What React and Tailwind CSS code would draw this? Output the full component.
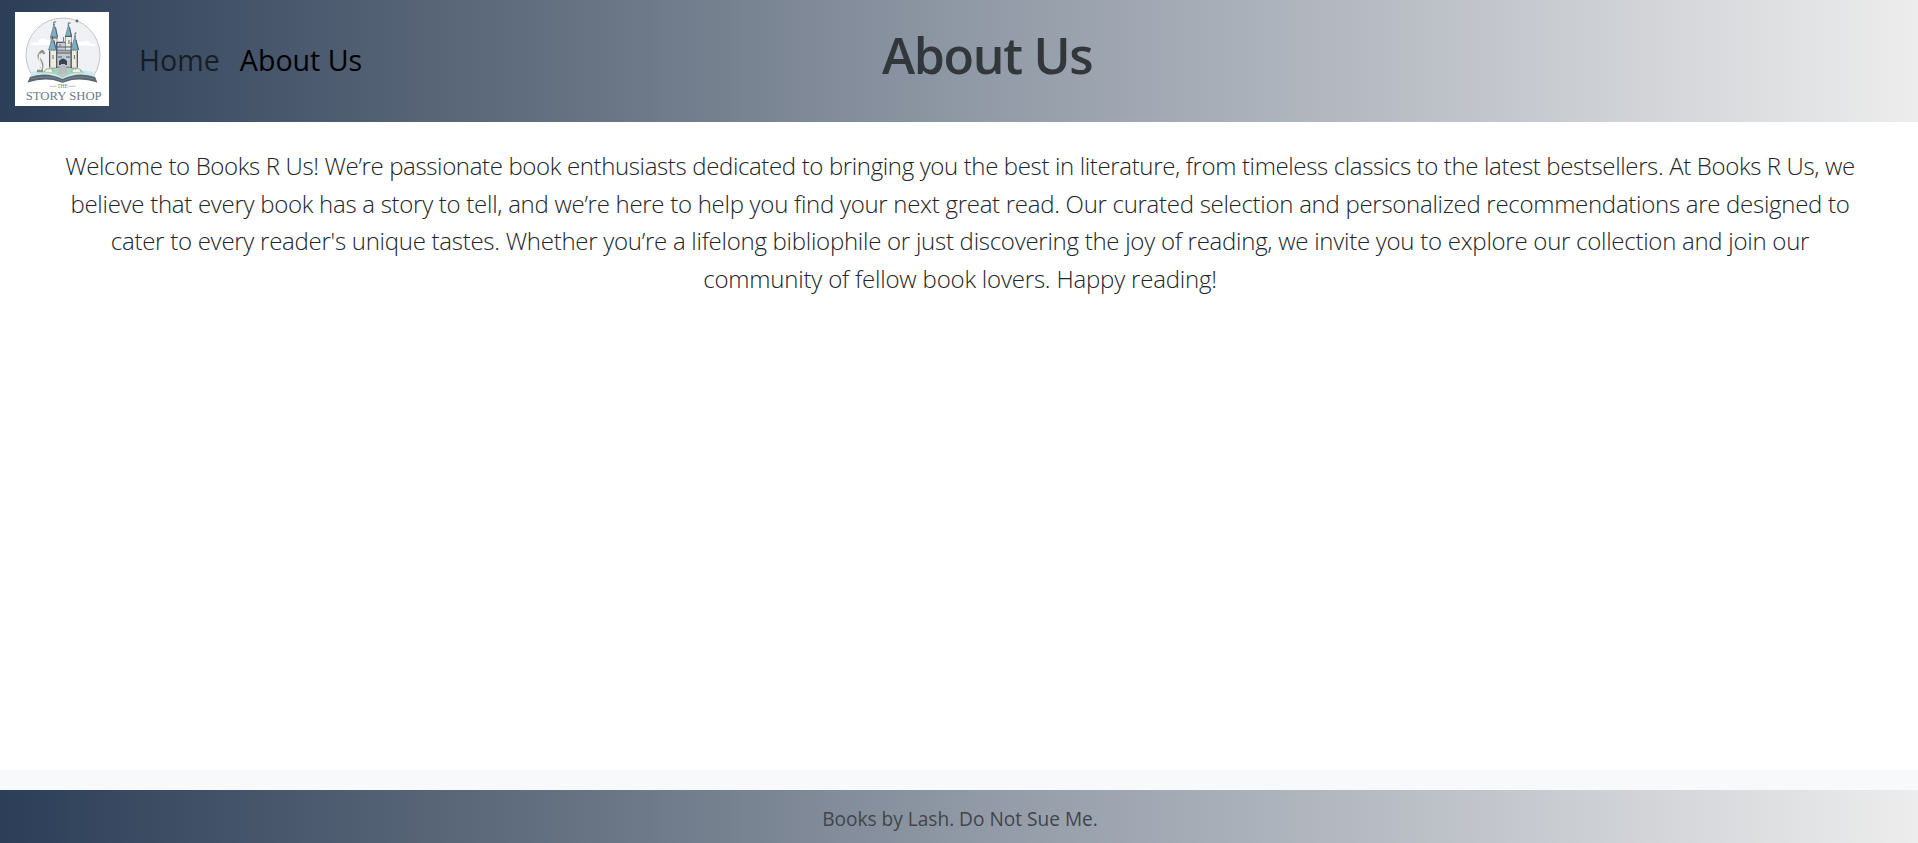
function Logo() {
  return (
    <svg viewBox="0 0 94 94" className="block size-[94px] shrink-0 bg-white">
      <circle cx="48" cy="43" r="37" fill="#eff1f4" stroke="#a7b0b7" strokeWidth=".7" />
      <path d="M6 65h82v20H6z" fill="#fff" />
      <g fill="#fff">
        <path d="M15 33q3-4 7-2q4-7 10-3q5-1 6 5zM60 33q2-5 7-3q5-4 9 2q4-1 5 2z" />
      </g>
      <circle cx="62" cy="9" r="1.400" fill="#596773" />
      <path d="M17 60Q31 56 47.500 65Q64 56 78 60L81 67Q62 62 47.500 68Q33 62 14 67Z" fill="#cfe8ee" />
      <path d="M26 61Q32 54 47 55Q62 53 70 61Q56 60 47.500 66Q39 60 26 61Z" fill="#a5d3bb" />
      <path d="M25 59Q29 55 26 49Q22 45 25 41Q28 37 29 42M22 59h6" fill="none" stroke="#839188" strokeWidth="2.400" />
      <path d="M25 58Q28 55 25.500 50Q23 45 25.500 41.500" fill="none" stroke="#f2eedb" strokeWidth="1.500" />
      <path d="M37 36h20v20H37z" fill="#8f9aa5" />
      <g fill="#f0ecd9" stroke="#6d7a86" strokeWidth=".6">
        <path d="M36 25h6v14h-6zM50.500 24h6v14h-6z" />
        <path d="M34.500 38h7v18h-7zM56 38h6.500v18H56z" />
        <path d="M42 30h8.500v8H42z" fill="#c9ccd3" />
        <path d="M41.500 39H56v16H41.500z" fill="#c3c8cf" />
      </g>
      <g fill="none" stroke="#4c5965" strokeWidth="1.200">
        <path d="M41.700 30v26M56.200 30v26M34.700 39v16M62.300 39v16" />
        <path d="M35.500 26h7M50 24.500h7M42 30.500h8M42 35h14M41 41h15M43 45h4M51 45h4" />
        <path d="M38 43v4M59.500 43v4M39 28v4M54 28v4M45 32v3M48.500 25v6" stroke="#78848f" />
      </g>
      <path d="M39 12L35.500 25H42.500ZM53.500 13L50.500 24H56.500ZM37.500 26L33.500 38H41.500ZM60 24L56 38H63.500Z" fill="#7fb0c2" stroke="#506b7c" strokeWidth=".6" />
      <path d="M40.500 15l2 10M54.500 15l2 9M39 29l2.500 9M61 28l2.500 10" stroke="#465866" strokeWidth=".9" />
      <path d="M38.800 13V10h2.400M53.300 14v-3h2.400M37.500 27v-3M60 25v-4h1.500" fill="none" stroke="#4c5965" strokeWidth=".9" />
      <path d="M44 53v-4q4-5 8 0v4z" fill="#384550" />
      <path d="M46 52h4l3 10H42z" fill="#b9bbc0" />
      <path d="M30 60q0-4 4-3q3-2 4 3M57 60q0-4 4-3q4-2 5 3" fill="#f5f0d8" stroke="#7d9b89" strokeWidth=".7" />
      <path d="M15 65Q31 59 47.500 67Q64 59 80 65L82.500 70.500Q64 65 50 70Q47.500 71.500 45 70Q31 65 12.500 70.500Z" fill="#586772" />
      <path d="M16 67Q33 62 47.500 69Q62 62 79 67" fill="none" stroke="#87949c" strokeWidth=".7" />
      <path d="M34.500 74.300h7M53.500 74.300h7" stroke="#8a96a0" strokeWidth=".6" />
      <text x="47.500" y="76" textAnchor="middle" fill="#74818c" className="font-['Liberation_Serif',serif] text-[5.500px]">THE</text>
      <text x="10.700" y="87.500" fill="#6c7b87" textLength="76" lengthAdjust="spacingAndGlyphs" className="font-['Liberation_Serif',serif] text-[13.500px]">STORY SHOP</text>
    </svg>
  );
}

const lines = [
  ["Welcome to Books R Us! We’re passionate book enthusiasts dedicated to bringing you the best in literature, from timeless classics to the latest bestsellers. At Books R Us, we", "tracking-[-0.36px]"],
  ["believe that every book has a story to tell, and we’re here to help you find your next great read. Our curated selection and personalized recommendations are designed to", "tracking-[-0.28px]"],
  ["cater to every reader's unique tastes. Whether you’re a lifelong bibliophile or just discovering the joy of reading, we invite you to explore our collection and join our", "tracking-[-0.265px]"],
  ["community of fellow book lovers. Happy reading!", "tracking-[-0.2px]"],
];

export default function App() {
  return (
    <div className="flex h-[843px] w-full flex-col overflow-hidden bg-[#f8f9fa] font-['Open_Sans',sans-serif] text-[#212529]">
      <header className="flex h-[122px] shrink-0 items-start bg-[linear-gradient(90deg,#2c3e58_0%,#5e6b7c_26%,#8f98a5_50%,#bdc1c8_75%,#ededed_100%)] pt-3 pl-[15px]">
        <Logo />
        <nav className="ml-[30px] flex w-[743px] gap-[20px] pt-[25px] text-[28.600px] leading-[46px]">
          <a className="text-black/65">Home</a>
          <a className="text-black">About Us</a>
        </nav>
        <h1 className="pt-[13px] text-[50px] leading-[60px] font-semibold tracking-[-1.300px] text-[#32373c]">About Us</h1>
      </header>
      <main className="flex h-[648px] shrink-0 flex-col items-center bg-white pt-[25px] pl-[2px] text-[24px] leading-[37.700px] font-light">
        {lines.map(([text, tracking]) => (
          <p key={text} className={`whitespace-nowrap ${tracking}`}>{text}</p>
        ))}
      </main>
      <footer className="mt-5 flex h-[53px] items-center justify-center bg-[linear-gradient(90deg,#2c3e58_0%,#5e6b7c_26%,#8f98a5_50%,#bdc1c8_75%,#ededed_100%)] pt-[6px] pl-[2px] text-[19.100px] text-[#414549]">
        Books by Lash. Do Not Sue Me.
      </footer>
    </div>
  );
}
